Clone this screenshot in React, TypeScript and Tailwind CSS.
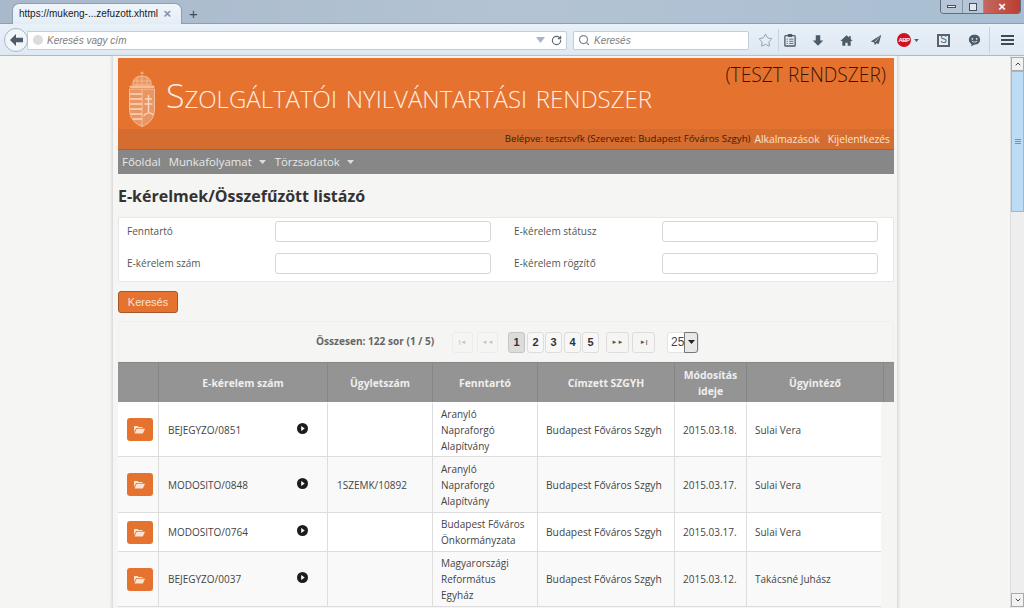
import { ChevronDown, RotateCw, Search, Star } from 'lucide-react';

const rows = [
  { id: 'BEJEGYZO/0851', ugylet: '', fenntarto: ['Aranyló', 'Napraforgó', 'Alapítvány'], datum: '2015.03.18.', ugyintezo: 'Sulai Vera', height: 'h-[55px] pt-[1px]', bg: 'bg-white' },
  { id: 'MODOSITO/0848', ugylet: '1SZEMK/10892', fenntarto: ['Aranyló', 'Napraforgó', 'Alapítvány'], datum: '2015.03.17.', ugyintezo: 'Sulai Vera', height: 'h-[56px]', bg: 'bg-[#f9f9f9]' },
  { id: 'MODOSITO/0764', ugylet: '', fenntarto: ['Budapest Főváros', 'Önkormányzata'], datum: '2015.03.17.', ugyintezo: 'Sulai Vera', height: 'h-[39px]', bg: 'bg-white' },
  { id: 'BEJEGYZO/0037', ugylet: '', fenntarto: ['Magyarországi', 'Református', 'Egyház'], datum: '2015.03.12.', ugyintezo: 'Takácsné Juhász', height: 'h-[55px]', bg: 'bg-[#f9f9f9]' },
];

const headers = ['', 'E-kérelem szám', 'Ügyletszám', 'Fenntartó', 'Címzett SZGYH', 'Módosítás ideje', 'Ügyintéző', ''];

function Crest() {
  return (
    <svg width="28" height="56" viewBox="0 0 28 56" fill="none" stroke="#f6c9a8" strokeWidth="1">
      <path d="M14 0.5v3M12.5 2h3" />
      <path d="M5 14c-1-5 3-9 9-9s10 4 9 9z" fill="#eb9a68" />
      <path d="M9 6v8M14 5v9M19 6v8M5 10h18" strokeWidth="0.7" />
      <path d="M2 15h24v1.5H2z" fill="#f6c9a8" />
      <path d="M1.500 18h25v20c0 10-6 15-12.500 17.500C7.500 53 1.500 48 1.500 38z" fill="#eb9a68" />
      <path d="M14 18v37" />
      <path d="M2 23h12M2 28h12M2 33h12M2 38h12M2.500 43h11.500M5 48h9" strokeWidth="1.600" stroke="#fbe3d2" />
      <path d="M20.500 24v17M17 28h7M16.500 33h8M15.500 45c3-4 7-4 10-1" stroke="#fbe3d2" strokeWidth="1.400" />
    </svg>
  );
}

function ToolbarIcons() {
  return (
    <div className="flex shrink-0 items-center text-[#4d5a68]">
      <Star size={15} strokeWidth={1.500} className="ml-[9px] text-[#8b9cae]" />
      <div className="ml-[5px] h-[22px] w-px bg-[#c5d2e0]" />
      <svg width="12" height="14" viewBox="0 0 14 16" className="ml-[5px]">
        <rect x="1" y="3" width="12" height="12" rx="1" fill="none" stroke="currentColor" strokeWidth="1.500" />
        <rect x="4.500" y="1" width="5" height="3.500" fill="currentColor" />
        <path d="M3 7h1.500M6 7h5M3 9.500h1.500M6 9.500h5M3 12h1.500M6 12h5" stroke="currentColor" />
      </svg>
      <svg width="12" height="13" viewBox="0 0 16 16" className="ml-[16px]" fill="currentColor">
        <path d="M5 1h6v7h4l-7 7-7-7h4z" />
      </svg>
      <svg width="13" height="13" viewBox="0 0 17 16" className="ml-[16px]" fill="currentColor">
        <path d="M8.500 1 0.500 8.500h2.500V15h4v-4h3v4h4V8.500h2.500l-2.500-2.400V2h-2v2.200z" />
      </svg>
      <svg width="12" height="12" viewBox="0 0 16 16" className="ml-[17px]" fill="currentColor">
        <path d="M15 1 1 10l4.500 1.200L6.500 15l2.200-2.700 3 1z" />
        <path d="M15 1 5.500 11.200 8 10z" fill="#e4edf6" />
      </svg>
      <div className="ml-[15px] flex h-[14px] w-[14px] items-center justify-center rounded-full bg-[#d4111a] font-['Liberation_Sans',sans-serif] text-[6px] font-bold leading-none tracking-[-0.5px] text-white">
        ABP
      </div>
      <svg width="5" height="3" viewBox="0 0 6 4" className="ml-[3px]" fill="currentColor">
        <path d="M0 0h6L3 4z" />
      </svg>
      <div className="ml-[18px] flex h-[13px] w-[13px] items-center justify-center border-2 border-[#58626d] bg-[#e8eef4] font-['Liberation_Sans',sans-serif] text-[10px] leading-none text-[#58626d]">
        S
      </div>
      <svg width="13" height="13" viewBox="0 0 15 15" className="ml-[18px]">
        <path d="M7.500 1C3.500 1 1 3.400 1 6.700c0 2.300 1.300 4.100 3.200 5L3.500 14.500 7 12.400c4 .2 7-2.200 7-5.700S11.500 1 7.500 1z" fill="currentColor" />
        <circle cx="5" cy="5.500" r="1" fill="#e4edf6" />
        <circle cx="10" cy="5.500" r="1" fill="#e4edf6" />
        <path d="M4.500 8.200c1.500 1.500 4.500 1.500 6 0" stroke="#e4edf6" fill="none" />
      </svg>
      <div className="ml-[8px] h-[26px] w-px bg-[#c5d2e0]" />
      <div className="ml-[11px] flex w-[13px] flex-col gap-[2px]">
        <div className="h-[2px] bg-[#3d4954]" />
        <div className="h-[2px] bg-[#3d4954]" />
        <div className="h-[2px] bg-[#3d4954]" />
      </div>
    </div>
  );
}

function BrowserChrome() {
  return (
    <div className="shrink-0 font-['Liberation_Sans',sans-serif]">
      <div className="flex h-[24px] items-end justify-between border-b border-[#8e9fb0] bg-gradient-to-r from-[#a8b9cc] via-[#b3c3d3] to-[#a9bed2] pl-[12px]">
        <div className="flex items-center">
          <div className="-mb-px flex h-[21px] w-[170px] items-center rounded-t-[7px] border-x border-t border-[#8e9fb0] bg-gradient-to-b from-[#f0f5fb] to-[#e4edf6] pb-[1px] pl-[6px] pr-[10px] text-[10px] text-[#1a1a1a]">
            <span className="flex-1">https://mukeng-...zefuzott.xhtml</span>
            <span className="text-[13px] font-bold leading-none text-[#8494a5]">×</span>
          </div>
          <span className="ml-[7px] text-[15px] leading-none text-[#3f4f60]">+</span>
        </div>
        <div className="mb-[9px] mr-[3px] flex h-[14px] w-[81px] self-start overflow-hidden rounded-b-[4px] border border-t-0 border-[#5e6f82]">
          <div className="flex w-[22px] items-center justify-center border-r border-[#8595a6] bg-[#b6c6d6]">
            <div className="h-[3px] w-[9px] border border-[#44525f] bg-white/70" />
          </div>
          <div className="flex w-[21px] items-center justify-center border-r border-[#8595a6] bg-[#b6c6d6]">
            <div className="h-[8px] w-[8px] border border-[#44525f] bg-white/60" />
          </div>
          <div className="flex flex-1 items-center justify-center bg-gradient-to-r from-[#c5685f] to-[#bb3c30] text-[13px] font-bold leading-none text-white">
            ×
          </div>
        </div>
      </div>
      <div className="flex h-[32px] items-center border-b border-[#a9bbcc] bg-gradient-to-b from-[#e8f0f8] to-[#dfe9f3] pl-[4px] pt-[1px]">
        <div className="z-10 flex h-[24px] w-[24px] shrink-0 items-center justify-center rounded-full border border-[#a9b8c8] bg-[#f0f5fa]">
          <svg width="13" height="12" viewBox="0 0 13 12" fill="#4d5a68">
            <path d="M6 0 0 6l6 6V8.200h7V3.800H6z" />
          </svg>
        </div>
        <div className="-ml-[1px] flex h-[19px] w-[540px] shrink-0 items-center rounded-r-[2px] border border-[#c2cedb] bg-white text-[10px] italic text-[#7d7d7d]">
          <div className="ml-[5px] h-[10px] w-[10px] rounded-full bg-[#dcdcdc]" />
          <span className="ml-[4px] flex-1">Keresés vagy cím</span>
          <svg width="9" height="6" viewBox="0 0 9 6" fill="#a9b5c1"><path d="M0 0h9L4.500 6z" /></svg>
          <RotateCw size={11} strokeWidth={2.500} className="ml-[6px] mr-[4px] text-[#5a6672]" />
        </div>
        <div className="ml-[6px] flex h-[19px] w-[176px] shrink-0 items-center rounded-[2px] border border-[#c2cedb] bg-white text-[10px] italic text-[#7d7d7d]">
          <Search size={12} strokeWidth={2.500} className="ml-[4px] text-[#7e8a96]" />
          <span className="ml-[4px]">Keresés</span>
        </div>
        <ToolbarIcons />
      </div>
    </div>
  );
}

function Scrollbar() {
  return (
    <div className="flex w-[14px] shrink-0 flex-col border-l border-[#dcdcdc] bg-[#eeeeee] pt-[1px]">
      <div className="flex h-[14px] items-center justify-center border border-[#aaaaaa] bg-[#f2f2f2]">
        <ChevronDown size={8} strokeWidth={3} className="rotate-180 text-[#444444]" />
      </div>
      <div className="flex h-[141px] items-center justify-center border border-[#8fbce0] bg-[#bcdcf6]">
        <div className="flex w-[6px] flex-col gap-px">
          <div className="h-px bg-[#6d94b3]" />
          <div className="h-px bg-[#6d94b3]" />
          <div className="h-px bg-[#6d94b3]" />
        </div>
      </div>
      <div className="flex-1" />
      <div className="mb-[1px] flex h-[14px] items-center justify-center border border-[#aaaaaa] bg-[#f2f2f2]">
        <ChevronDown size={8} strokeWidth={3} className="text-[#444444]" />
      </div>
    </div>
  );
}

function Field({ label }: { label: string }) {
  return (
    <div className="flex h-[21px] items-center">
      <span className="w-[148px] shrink-0 text-[#555555]">{label}</span>
      <div className="h-[21px] w-[216px] rounded-[3px] border border-[#d6d6d6] bg-white" />
    </div>
  );
}

function PageButton({ label, className }: { label: string; className: string }) {
  return (
    <div className={`flex h-[21px] items-center justify-center rounded-[3px] border font-['Liberation_Sans',sans-serif] font-bold ${className}`}>
      {label}
    </div>
  );
}

function Pager() {
  const disabled = 'w-[21px] border-[#ececec] bg-[#f5f5f3] text-[6px] text-[#c4c4c4]';
  const arrow = 'w-[23px] border-[#dddddd] bg-[#f5f5f3] text-[6px] text-[#555555]';
  const page = 'w-[17px] border-[#dddddd] bg-[#f7f7f7] text-[11px] text-[#333333]';
  return (
    <div className="flex h-[41px] items-center border border-[#f0f0ee] pl-[197px] pt-[1px]">
      <span className="w-[136px] text-[10.1px] font-bold text-[#666666]">Összesen: 122 sor (1 / 5)</span>
      <PageButton label="|◄" className={disabled} />
      <PageButton label="◄◄" className={`ml-[4px] ${disabled}`} />
      <PageButton label="1" className="ml-[10px] w-[17px] border-[#c4c4c4] bg-[#dcdcdc] text-[11px] text-[#333333]" />
      <PageButton label="2" className={`ml-[2px] ${page}`} />
      <PageButton label="3" className={`ml-[1px] ${page}`} />
      <PageButton label="4" className={`ml-[2px] ${page}`} />
      <PageButton label="5" className={`ml-[1px] ${page}`} />
      <PageButton label="►►" className={`ml-[7px] ${arrow}`} />
      <PageButton label="►|" className={`ml-[3px] ${arrow}`} />
      <div className="ml-[12px] flex h-[21px] w-[32px] items-center rounded-[3px] border border-[#e4e4e4] bg-white pl-[3px] font-['Liberation_Sans',sans-serif] text-[12px] text-[#444444]">
        <span className="flex-1">25</span>
        <div className="flex h-[21px] w-[14px] items-center justify-center rounded-r-[3px] border border-[#777777] bg-[#e8e8e8]">
          <svg width="7" height="4" viewBox="0 0 7 4" fill="#222222"><path d="M0 0h7L3.500 4z" /></svg>
        </div>
      </div>
    </div>
  );
}

function PlayDot() {
  return (
    <svg width="11" height="11" viewBox="0 0 11 11" className="-mt-[3px] shrink-0">
      <circle cx="5.500" cy="5.500" r="5.500" fill="#1d1d1d" />
      <path d="M4.200 3v5l3.500-2.500z" fill="#ffffff" />
    </svg>
  );
}

function FolderIcon() {
  return (
    <svg width="11" height="9" viewBox="0 0 11 9" fill="#fbe3d2">
      <path d="M0 1h3.500l1 1H8.500v1H2.200L0 7z" />
      <path d="M2.700 3.800H11L8.800 8.500H0.500z" />
    </svg>
  );
}

function DataTable() {
  const cell = 'flex items-center whitespace-nowrap border-r border-[#dddddd] pl-[8px]';
  return (
    <div>
      <div className="grid h-[40px] grid-cols-[41px_169px_105px_105px_137px_72px_137px_10px] border-t border-[#8a8a8a] bg-[#949494] text-center text-[10.4px] font-bold leading-[16px] text-[#efefef]">
        {headers.map((header, index) => (
          <div key={index} className="flex items-center justify-center border-r border-[#858585] px-[6px] last:border-r-0">
            {header}
          </div>
        ))}
      </div>
      <div className="w-[763px] text-[10px] leading-[16px] text-[#444444]">
        {rows.map((row) => (
          <div key={row.id} className={`grid grid-cols-[41px_169px_105px_105px_137px_72px_134px] border-b border-[#dddddd] ${row.height} ${row.bg}`}>
            <div className="flex items-center justify-center border-r border-[#dddddd] pl-[3px]">
              <div className="flex h-[23px] w-[26px] items-center justify-center rounded-[3px] bg-[#e5732f]">
                <FolderIcon />
              </div>
            </div>
            <div className={`${cell} justify-between pr-[19px]`}>
              <span className="pl-px">{row.id}</span>
              <PlayDot />
            </div>
            <div className={`${cell} pl-[9px]`}>{row.ugylet}</div>
            <div className={cell}>
              <div>
                {row.fenntarto.map((line) => (
                  <div key={line}>{line}</div>
                ))}
              </div>
            </div>
            <div className={`${cell} text-[10.25px]`}>Budapest Főváros Szgyh</div>
            <div className={cell}>{row.datum}</div>
            <div className="flex items-center whitespace-nowrap pl-[8px]">{row.ugyintezo}</div>
          </div>
        ))}
      </div>
    </div>
  );
}

export default function App() {
  return (
    <div className="flex h-[608px] w-[1024px] flex-col overflow-hidden bg-[#f5f5f3] font-['Open_Sans',sans-serif] text-[10px]">
      <BrowserChrome />
      <div className="flex min-h-0 flex-1">
        <div className="min-w-0 flex-1">
          <div className="ml-[112px] h-full w-[786px] border-x border-[#dedede] bg-[#f5f5f3] pl-[5px] pr-[3px] pt-[2px] shadow-[0_0_3px_#cccccc]">
            <div className="bg-[#e5732f]">
              <div className="flex h-[71px] justify-between pl-[10px] pr-[8px]">
                <div className="flex items-center">
                  <div className="mt-[11px] opacity-90">
                    <Crest />
                  </div>
                  <h1 className="ml-[10px] mt-[5px] whitespace-nowrap text-[33.85px] font-light leading-none text-[#fdeee3] [font-variant:small-caps]">
                    Szolgáltatói nyilvántartási rendszer
                  </h1>
                </div>
                <div className="whitespace-nowrap pt-[5px] text-[19.2px] font-light leading-[24px] text-[#3a1503]">(TESZT RENDSZER)</div>
              </div>
              <div className="flex h-[21px] items-center justify-end border-b border-[#b0602f] bg-[#d56d30] pr-[4px] pt-[1px]">
                <span className="text-[9.7px] text-[#3f1b08]">Belépve: tesztsvfk (Szervezet: Budapest Főváros Szgyh)</span>
                <span className="ml-[4px] text-[10.3px] text-[#fce3d0]">Alkalmazások</span>
                <span className="ml-[8px] text-[10.3px] text-[#fce3d0]">Kijelentkezés</span>
              </div>
            </div>
            <div className="flex h-[24px] items-center bg-[#868786] pl-[4px] text-[11.4px] text-[#e8e8e8]">
              <span>Főoldal</span>
              <span className="ml-[8px]">Munkafolyamat</span>
              <svg width="7" height="4" viewBox="0 0 7 4" className="ml-[7px]" fill="#dddddd"><path d="M0 0h7L3.500 4z" /></svg>
              <span className="ml-[9px]">Törzsadatok</span>
              <svg width="7" height="4" viewBox="0 0 7 4" className="ml-[7px]" fill="#dddddd"><path d="M0 0h7L3.500 4z" /></svg>
            </div>
            <h2 className="mt-[12px] h-[20px] text-[16px] font-bold leading-[20px] text-[#333333]">E-kérelmek/Összefűzött listázó</h2>
            <div className="mt-[11px] grid h-[65px] grid-cols-2 content-start gap-y-[11px] border border-[#e8e8e8] bg-white pl-[8px] pt-[3px]">
              <Field label="Fenntartó" />
              <div className="pl-[4px]"><Field label="E-kérelem státusz" /></div>
              <Field label="E-kérelem szám" />
              <div className="pl-[4px]"><Field label="E-kérelem rögzítő" /></div>
            </div>
            <button className="mt-[9px] flex h-[22px] w-[60px] items-center justify-center rounded-[3px] border border-[#a5562a] bg-[#e5732f] font-['Liberation_Sans',sans-serif] text-[11px] text-[#fbe3d2]">
              Keresés
            </button>
            <div className="mt-[8px]">
              <Pager />
              <DataTable />
            </div>
          </div>
        </div>
        <Scrollbar />
      </div>
    </div>
  );
}
